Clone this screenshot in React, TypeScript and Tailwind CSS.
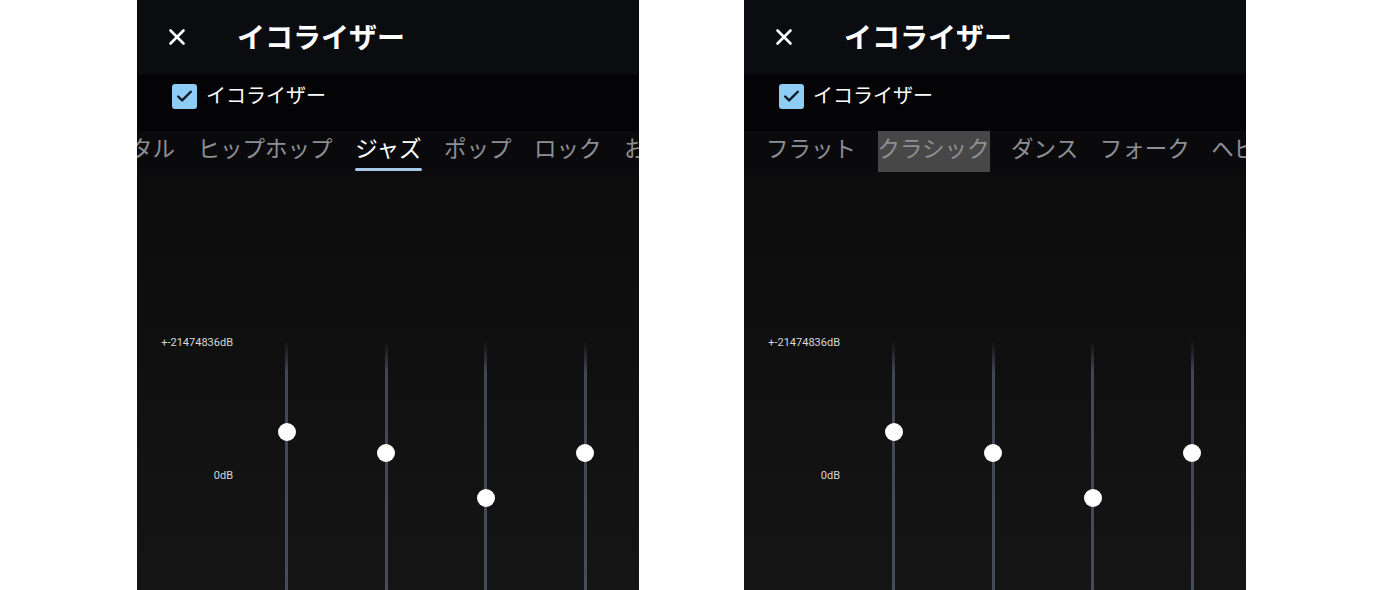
import { Check, X } from "lucide-react";

type Preset = { label: string; active?: boolean; pressed?: boolean };

const JP = { fontFamily: '"Noto Sans CJK JP", "Noto Sans", sans-serif' };

// band gains, as offsets (px) of the thumb from the top of the track
const BANDS = [92, 113, 158, 113];

const leftPresets: Preset[] = [
  { label: "ヘビーメタル" },
  { label: "ヒップホップ" },
  { label: "ジャズ", active: true },
  { label: "ポップ" },
  { label: "ロック" },
  { label: "おすすめ" },
];

const rightPresets: Preset[] = [
  { label: "フラット" },
  { label: "クラシック", pressed: true },
  { label: "ダンス" },
  { label: "フォーク" },
  { label: "ヘビーメタル" },
];

const PresetTabs = ({ presets, offset, gap }: { presets: Preset[]; offset: string; gap: string }) => (
  <div className="h-[41px] shrink-0 bg-[#0a0a0d] overflow-hidden">
    <div className={`flex h-full whitespace-nowrap ${gap} ${offset}`}>
      {presets.map((p) => (
        <div
          key={p.label}
          className={`relative flex h-full shrink-0 items-center text-[22.5px] leading-none ${
            p.active ? "text-white" : "text-[#8c8f95]"
          } ${p.pressed ? "bg-[#474747]" : ""}`}
        >
          <span className="-mt-[9px]">{p.label}</span>
          {p.active && (
            <span className="absolute bottom-[1px] left-0 right-0 h-[3px] rounded-full bg-[#a9c8e8]" />
          )}
        </div>
      ))}
    </div>
  </div>
);

const BandSlider = ({ top }: { top: number }) => (
  <div className="flex w-[99.5px] justify-center">
    <div className="relative h-[260px] w-[3px] bg-gradient-to-b from-[#0f0f10] via-[#404654] via-[12%] to-[#464c5b]">
      <span
        className="absolute left-1/2 h-[18px] w-[18px] -translate-x-1/2 -translate-y-1/2 rounded-full bg-white"
        style={{ top }}
      />
    </div>
  </div>
);

const EqualizerScreen = ({
  presets,
  offset,
  gap,
}: {
  presets: Preset[];
  offset: string;
  gap: string;
}) => (
  <div className="flex h-[590px] w-[502px] shrink-0 flex-col overflow-hidden" style={JP}>
    <header className="flex h-[74px] shrink-0 items-center bg-[#0b0c10] pl-[27px]">
      <X size={26} strokeWidth={2.4} className="text-white" />
      <h1 className="ml-[47px] -mt-[2px] text-[28px] font-bold leading-none text-white">
        イコライザー
      </h1>
    </header>

    <div className="flex h-[57px] shrink-0 items-start bg-[#040406] pl-[35px] pt-[10px]">
      <span className="flex h-[25px] w-[25px] items-center justify-center rounded-[3px] bg-[#8ecdf4]">
        <Check size={19} strokeWidth={3} className="text-[#0e1a28]" />
      </span>
      <span className="ml-[9px] mt-[1px] text-[20px] leading-none text-white">イコライザー</span>
    </div>

    <PresetTabs presets={presets} offset={offset} gap={gap} />

    <div className="flex flex-1 bg-gradient-to-b from-[#0c0c0c] to-[#151515] pt-[168px]">
      <div
        className="relative w-[96px] shrink-0 text-right text-[11px] leading-none text-[#d8d8d8]"
        style={{ fontFamily: "Roboto, sans-serif" }}
      >
        <div className="-mt-[3px]">+-21474836dB</div>
        <div className="mt-[122px]">0dB</div>
      </div>
      <div className="ml-[4px] flex">
        {BANDS.map((top, i) => (
          <BandSlider key={i} top={top} />
        ))}
      </div>
    </div>
  </div>
);

export default function App() {
  return (
    <div className="flex h-[590px] w-[1379px] gap-[105px] overflow-hidden bg-white pl-[137px]">
      <EqualizerScreen presets={leftPresets} offset="-ml-[96px]" gap="gap-[22.5px]" />
      <EqualizerScreen presets={rightPresets} offset="ml-[22px]" gap="gap-[21.5px]" />
    </div>
  );
}
